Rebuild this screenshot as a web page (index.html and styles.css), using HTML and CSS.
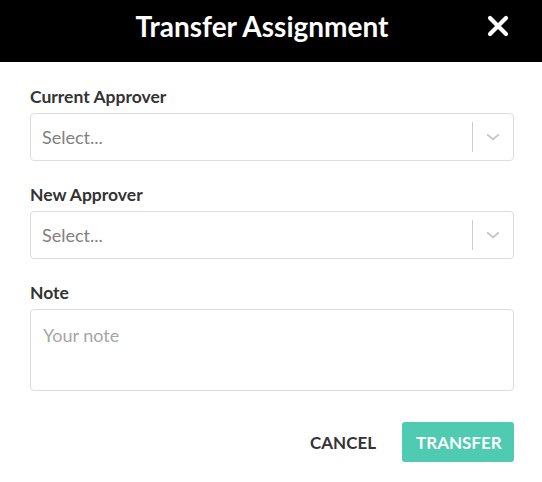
FILE: index.html
```html
<!DOCTYPE html>
<html lang="en">
<head>
<meta charset="utf-8">
<title>Transfer Assignment</title>
<link rel="stylesheet" href="styles.css">
</head>
<body>
<div class="modal">
  <header class="modal-header">
    <h1 class="modal-title">Transfer Assignment</h1>
    <button class="close-btn" type="button" aria-label="Close">
      <svg width="22" height="22" viewBox="0 0 22 22"><path d="M3 3 L19 19 M19 3 L3 19" stroke="#fff" stroke-width="4.2" stroke-linecap="round" fill="none"/></svg>
    </button>
  </header>
  <div class="modal-body">
    <div class="field">
      <label class="field-label">Current Approver</label>
      <div class="select">
        <span class="select-value">Select...</span>
        <span class="select-sep"></span>
        <span class="select-indicator">
          <svg width="14" height="8" viewBox="0 0 14 8"><path d="M1.2 1.5 L7 6.3 L12.8 1.5" stroke="#c8c8c8" stroke-width="1.9" fill="none"/></svg>
        </span>
      </div>
    </div>
    <div class="field">
      <label class="field-label">New Approver</label>
      <div class="select">
        <span class="select-value">Select...</span>
        <span class="select-sep"></span>
        <span class="select-indicator">
          <svg width="14" height="8" viewBox="0 0 14 8"><path d="M1.2 1.5 L7 6.3 L12.8 1.5" stroke="#c8c8c8" stroke-width="1.9" fill="none"/></svg>
        </span>
      </div>
    </div>
    <div class="field">
      <label class="field-label">Note</label>
      <textarea class="note" placeholder="Your note"></textarea>
    </div>
    <div class="actions">
      <button class="btn btn-cancel" type="button">CANCEL</button>
      <button class="btn btn-primary" type="button">TRANSFER</button>
    </div>
  </div>
</div>
</body>
</html>
```
FILE: styles.css
```css
* {
  box-sizing: border-box;
}

html, body {
  margin: 0;
  padding: 0;
  background: #ffffff;
}

body {
  font-family: Lato, "Open Sans", sans-serif;
  color: #333333;
}

.modal {
  width: 542px;
  background: #ffffff;
}

.modal-header {
  height: 62px;
  background: #000000;
  display: flex;
  align-items: center;
  padding: 9px 33px 19px 37px;
}

.modal-title {
  flex: 1;
  margin: 0;
  text-align: center;
  color: #ffffff;
  font-size: 28px;
  font-weight: 700;
  line-height: 34px;
}

.close-btn {
  width: 22px;
  height: 22px;
  padding: 0;
  border: 0;
  background: transparent;
  display: flex;
  cursor: pointer;
}

.modal-body {
  padding: 24px 28px 20px 30px;
}

.field {
  margin-bottom: 23px;
}

.field-label {
  display: block;
  font-size: 17.5px;
  font-weight: 700;
  line-height: 22px;
  color: #333333;
  margin-bottom: 5px;
}

.select {
  height: 48px;
  border: 1px solid #dddddd;
  border-radius: 4px;
  display: flex;
  align-items: center;
  padding-left: 11px;
}

.select-value {
  flex: 1;
  font-size: 18px;
  line-height: 22px;
  color: #808080;
}

.select-sep {
  width: 1px;
  align-self: stretch;
  margin: 8px 0;
  background: #cccccc;
}

.select-indicator {
  width: 40px;
  display: flex;
  justify-content: center;
  align-items: center;
}

.note {
  display: block;
  width: 100%;
  height: 82px;
  border: 1px solid #dddddd;
  border-radius: 4px;
  padding: 14px 12px;
  font-family: Lato, "Open Sans", sans-serif;
  font-size: 18px;
  line-height: 22px;
  color: #333333;
  resize: none;
  outline: none;
}

.note::placeholder {
  color: #a6a6a6;
}

.actions {
  display: flex;
  justify-content: flex-end;
  gap: 12px;
  margin-top: 31px;
}

.btn {
  height: 40px;
  padding: 0 14px;
  border: 0;
  border-radius: 3px;
  font-family: Lato, "Open Sans", sans-serif;
  font-size: 17px;
  font-weight: 700;
  cursor: pointer;
}

.btn-cancel {
  background: transparent;
  color: #333333;
}

.btn-primary {
  background: #4ecbb0;
  color: #ffffff;
  width: 112px;
}
```
